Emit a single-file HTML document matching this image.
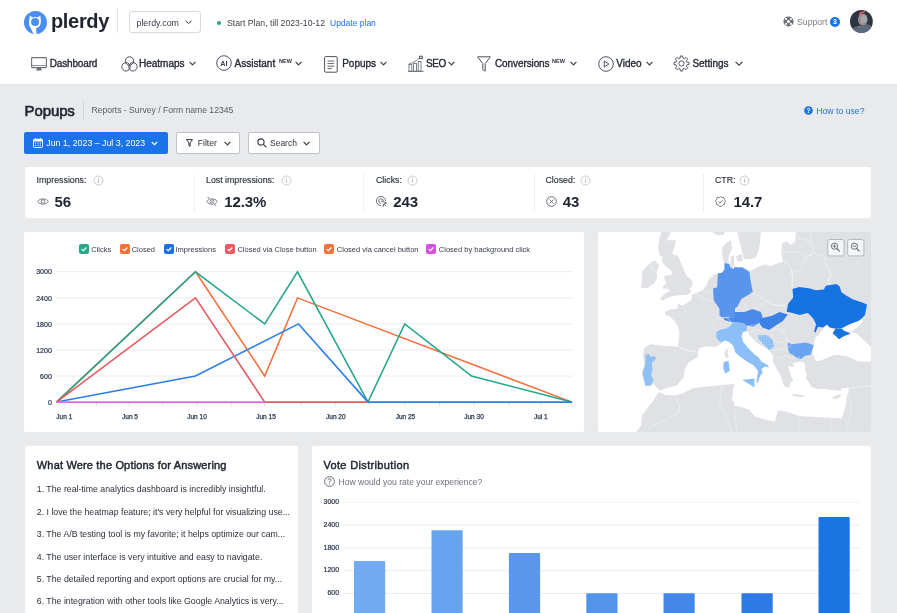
<!DOCTYPE html>
<html><head><meta charset="utf-8">
<style>
*{box-sizing:border-box;margin:0;padding:0}
html,body{will-change:transform;width:897px;height:613px;overflow:hidden;background:#e9eaec;font-family:"Liberation Sans",sans-serif;color:#1f2430}
.a{position:absolute;white-space:nowrap}
#hdr{position:absolute;left:0;top:0;width:897px;height:83.6px;background:#fff;box-shadow:0 0.8px 0 #e2e3e6}
.card{position:absolute;background:#fff;border-radius:2px}
.nav{font-weight:400;font-size:10px;color:#262b35;line-height:10px;-webkit-text-stroke:0.35px #262b35}
.chev{position:absolute}
</style></head><body>
<div id="hdr"></div>

<!-- logo -->
<svg class="a" style="left:24px;top:11px" width="23" height="23" viewBox="0 0 23 23">
<circle cx="11.5" cy="11.5" r="11.5" fill="#4a8ff0"/>
<path d="M5.9 4.6 L8.3 6.5 Q11 5.7 13.8 6.5 L16.3 4.6 L16.9 9.5 Q17.3 15.6 12 17.4 L12.8 23 L9.3 22.8 L6.6 16.8 Q4.6 14.8 5.1 10 Z" fill="#fff"/>
<circle cx="11.1" cy="10.9" r="4" fill="#4a8ff0"/>
</svg>
<div class="a" style="left:50.9px;top:10.8px;font-size:20px;line-height:20px;font-weight:700;letter-spacing:-0.3px;color:#1f2430">plerdy</div>
<div class="a" style="left:117px;top:8px;width:1px;height:25px;background:#e3e5e8"></div>
<div class="a" style="left:128.8px;top:11.3px;width:72.5px;height:22.2px;border:1px solid #d6d9de;border-radius:3px"></div>
<div class="a" style="left:136.5px;top:19px;font-size:8.8px;line-height:9px;color:#353a45">plerdy.com</div>
<svg class="a" style="left:184.5px;top:20.2px" width="7" height="5" viewBox="0 0 7 5"><path d="M0.6 0.8 L3.5 3.6 L6.4 0.8" fill="none" stroke="#2b303b" stroke-width="1"/></svg>
<div class="a" style="left:217.2px;top:20.5px;width:4px;height:4px;border-radius:50%;background:#1fa57f"></div>
<div class="a" style="left:227px;top:19px;font-size:8.7px;line-height:9px;color:#3a3f4a">Start Plan, till 2023-10-12</div>
<div class="a" style="left:330px;top:19px;font-size:8.5px;line-height:9px;color:#1a73e8">Update plan</div>

<svg class="a" style="left:782.5px;top:16.3px" width="11" height="11" viewBox="0 0 11 11"><circle cx="5.5" cy="5.5" r="5.1" fill="#6e7279"/><circle cx="5.5" cy="5.5" r="1.5" fill="#fff"/><g fill="#fff"><circle cx="3.1" cy="3.1" r="1.05"/><circle cx="7.9" cy="3.1" r="1.05"/><circle cx="3.1" cy="7.9" r="1.05"/><circle cx="7.9" cy="7.9" r="1.05"/></g></svg>
<div class="a" style="left:797px;top:18px;font-size:8.7px;line-height:9px;color:#7a7f88">Support</div>
<div class="a" style="left:830px;top:17px;width:10px;height:10px;border-radius:50%;background:#1a73e8;color:#fff;font-size:7px;line-height:10px;text-align:center;font-weight:700">3</div>
<svg class="a" style="left:849.5px;top:10.3px" width="23" height="23" viewBox="0 0 23 23">
<defs><clipPath id="avc"><circle cx="11.4" cy="11.4" r="11.4"/></clipPath></defs>
<g clip-path="url(#avc)">
<rect width="23" height="23" fill="#2f3540"/>
<path d="M13 14 Q17 13 21 16 L23 23 L12 23 Z" fill="#62666e"/>
<path d="M0 19 Q6 16 11 15.5 Q16 15 23 16.5 V23 H0 Z" fill="#5b6a7e"/>
<ellipse cx="12.8" cy="9.6" rx="4.8" ry="6" fill="#8f9399"/>
<ellipse cx="13.8" cy="9" rx="2.8" ry="4" fill="#a4a8ad"/>
<path d="M9 4.5 L10.6 1.4 L12.4 2 L14.6 0.6 L15.2 2.2 L11.5 3.6 L9.8 5.6 Z" fill="#f05a62"/>
<rect x="9.8" y="9.3" width="3.6" height="1.1" fill="#f4866e"/>
<circle cx="11.5" cy="12.8" r="0.8" fill="#f4866e"/>
<circle cx="9.6" cy="16.5" r="0.7" fill="#f4866e"/>
</g></svg>

<!-- nav -->
<svg class="a" style="left:31px;top:57px" width="16" height="14" viewBox="0 0 16 14"><rect x="0.6" y="0.6" width="14.8" height="10" rx="0.8" fill="none" stroke="#6b7079" stroke-width="1.1"/><path d="M0.6 8.6 H15.4" stroke="#6b7079" stroke-width="0.8"/><path d="M5 13.4 L6.3 10.8 H9.7 L11 13.4 Z" fill="#6b7079"/></svg>
<div class="a nav" style="left:49.7px;top:59.2px;letter-spacing:-0.15px">Dashboard</div>

<svg class="a" style="left:120.5px;top:55.5px" width="17" height="16" viewBox="0 0 17 16"><circle cx="8.5" cy="5" r="4.2" fill="none" stroke="#3a3f48" stroke-width="0.9"/><circle cx="5" cy="10.8" r="4.2" fill="none" stroke="#3a3f48" stroke-width="0.9"/><circle cx="12" cy="10.8" r="4.2" fill="none" stroke="#3a3f48" stroke-width="0.9"/></svg>
<div class="a nav" style="left:139px;top:59.2px">Heatmaps</div>
<svg class="a" style="left:188.5px;top:61px" width="7" height="5" viewBox="0 0 7 5"><path d="M0.6 0.9 L3.5 3.9 L6.4 0.9" fill="none" stroke="#3a3f48" stroke-width="1.15"/></svg>

<svg class="a" style="left:216.2px;top:55.2px" width="16" height="16" viewBox="0 0 16 16"><circle cx="8" cy="8" r="7.3" fill="none" stroke="#3a3f48" stroke-width="0.9"/><text x="8" y="10.6" font-family="Liberation Sans" font-size="7.3" font-weight="700" text-anchor="middle" fill="#3a3f48">AI</text></svg>
<div class="a nav" style="left:234.6px;top:59.2px">Assistant</div>
<div class="a" style="left:279px;top:58.6px;font-size:5.5px;line-height:5.5px;font-weight:700;color:#2b303b">NEW</div>
<svg class="a" style="left:294.5px;top:61px" width="7" height="5" viewBox="0 0 7 5"><path d="M0.6 0.9 L3.5 3.9 L6.4 0.9" fill="none" stroke="#3a3f48" stroke-width="1.15"/></svg>

<svg class="a" style="left:323.5px;top:55.5px" width="14" height="17" viewBox="0 0 14 17"><rect x="0.6" y="0.6" width="12.6" height="15.6" rx="1" fill="none" stroke="#3a3f48" stroke-width="0.9"/><path d="M3.5 5 H10.3 M3.5 7.6 H10.3 M3.5 10.2 H10.3 M3.5 12.6 H8" stroke="#3a3f48" stroke-width="0.8"/></svg>
<div class="a nav" style="left:342.2px;top:59.2px">Popups</div>
<svg class="a" style="left:379.5px;top:61px" width="7" height="5" viewBox="0 0 7 5"><path d="M0.6 0.9 L3.5 3.9 L6.4 0.9" fill="none" stroke="#3a3f48" stroke-width="1.15"/></svg>

<svg class="a" style="left:408px;top:55px" width="16" height="17" viewBox="0 0 16 17"><g fill="none" stroke="#5d626b" stroke-width="0.8"><path d="M0.2 16.3 H15.6" stroke-width="0.9"/><rect x="1" y="9.6" width="2.8" height="6.7"/><rect x="5.6" y="8.4" width="2.8" height="7.9"/><rect x="10.2" y="6.4" width="2.8" height="9.9"/><path d="M0.3 9.4 L4.8 7.6 L8.4 5.6 L11.3 3.2"/><rect x="11.6" y="1.2" width="2.6" height="2.4" fill="#fff" stroke="#3a3f48" stroke-width="0.9"/></g></svg>
<div class="a nav" style="left:426px;top:59.2px;letter-spacing:-0.4px">SEO</div>
<svg class="a" style="left:447.5px;top:61px" width="7" height="5" viewBox="0 0 7 5"><path d="M0.6 0.9 L3.5 3.9 L6.4 0.9" fill="none" stroke="#3a3f48" stroke-width="1.15"/></svg>

<svg class="a" style="left:477px;top:55.5px" width="14" height="16" viewBox="0 0 14 16"><path d="M0.6 0.8 H13.4 L8.2 7.6 V15.2 L5.8 13.6 V7.6 Z" fill="none" stroke="#3a3f48" stroke-width="0.9" stroke-linejoin="round"/></svg>
<div class="a nav" style="left:495px;top:59.2px;letter-spacing:-0.1px">Conversions</div>
<div class="a" style="left:552px;top:58.6px;font-size:5.5px;line-height:5.5px;font-weight:700;color:#2b303b">NEW</div>
<svg class="a" style="left:569.5px;top:61px" width="7" height="5" viewBox="0 0 7 5"><path d="M0.6 0.9 L3.5 3.9 L6.4 0.9" fill="none" stroke="#3a3f48" stroke-width="1.15"/></svg>

<svg class="a" style="left:597.5px;top:55.5px" width="16" height="16" viewBox="0 0 16 16"><circle cx="8" cy="8" r="7.3" fill="none" stroke="#3a3f48" stroke-width="0.9"/><path d="M6.3 5 L10.8 8 L6.3 11 Z" fill="none" stroke="#3a3f48" stroke-width="0.9" stroke-linejoin="round"/></svg>
<div class="a nav" style="left:616.2px;top:59.2px">Video</div>
<svg class="a" style="left:645.5px;top:61px" width="7" height="5" viewBox="0 0 7 5"><path d="M0.6 0.9 L3.5 3.9 L6.4 0.9" fill="none" stroke="#3a3f48" stroke-width="1.15"/></svg>

<svg class="a" style="left:673.3px;top:54.9px" width="17" height="17" viewBox="0 0 17 17"><g fill="none" stroke="#3a3f48" stroke-width="0.85" stroke-linejoin="round"><path d="M7.15 3.07 L7.31 0.99 L9.69 0.99 L9.85 3.07 L11.38 3.70 L12.97 2.35 L14.65 4.03 L13.30 5.62 L13.93 7.15 L16.01 7.31 L16.01 9.69 L13.93 9.85 L13.30 11.38 L14.65 12.97 L12.97 14.65 L11.38 13.30 L9.85 13.93 L9.69 16.01 L7.31 16.01 L7.15 13.93 L5.62 13.30 L4.03 14.65 L2.35 12.97 L3.70 11.38 L3.07 9.85 L0.99 9.69 L0.99 7.31 L3.07 7.15 L3.70 5.62 L2.35 4.03 L4.03 2.35 L5.62 3.70 Z"/><circle cx="8.5" cy="8.5" r="2.6"/></g></svg>
<div class="a nav" style="left:692.4px;top:59.2px">Settings</div>
<svg class="a" style="left:735px;top:61px" width="8" height="5" viewBox="0 0 8 5"><path d="M0.6 0.9 L4 4.1 L7.4 0.9" fill="none" stroke="#3a3f48" stroke-width="1.15"/></svg>

<!-- title -->
<div class="a" style="left:24.5px;top:103.3px;font-size:15px;line-height:15px;font-weight:400;-webkit-text-stroke:0.6px #1f2430;color:#1f2430;letter-spacing:-0.1px">Popups</div>
<div class="a" style="left:83px;top:101px;width:1px;height:19px;background:#cfd2d6"></div>
<div class="a" style="left:91.4px;top:106.2px;font-size:8.6px;line-height:9px;color:#555b66">Reports - Survey / Form name 12345</div>
<svg class="a" style="left:803.5px;top:106.3px" width="9" height="9" viewBox="0 0 9 9"><circle cx="4.5" cy="4.5" r="4.3" fill="#1a73e8"/><text x="4.5" y="7.2" font-family="Liberation Sans" font-size="6.5" font-weight="700" text-anchor="middle" fill="#fff">?</text></svg>
<div class="a" style="left:816.2px;top:106.5px;font-size:8.7px;line-height:9px;color:#1a73e8">How to use?</div>

<!-- buttons -->
<div class="a" style="left:24px;top:132px;width:144px;height:22px;background:#1a73e8;border-radius:2px"></div>
<svg class="a" style="left:33px;top:138px" width="10" height="10" viewBox="0 0 10 10"><rect x="0.5" y="1.3" width="9" height="8.2" rx="1" fill="none" stroke="#fff" stroke-width="1"/><rect x="0.5" y="1.3" width="9" height="2.2" fill="#fff"/><path d="M2.5 0 V2 M7.5 0 V2" stroke="#fff" stroke-width="1"/><g fill="#fff"><rect x="2" y="4.6" width="1.2" height="1"/><rect x="4.4" y="4.6" width="1.2" height="1"/><rect x="6.8" y="4.6" width="1.2" height="1"/><rect x="2" y="6.8" width="1.2" height="1"/><rect x="4.4" y="6.8" width="1.2" height="1"/><rect x="6.8" y="6.8" width="1.2" height="1"/></g></svg>
<div class="a" style="left:46.3px;top:138.7px;font-size:8.8px;line-height:9px;color:#fff">Jun 1, 2023 – Jul 3, 2023</div>
<svg class="a" style="left:151px;top:141px" width="7" height="5" viewBox="0 0 7 5"><path d="M0.8 1 L3.5 3.7 L6.2 1" fill="none" stroke="#fff" stroke-width="1.1"/></svg>

<div class="a" style="left:175.5px;top:131.6px;width:64.5px;height:22px;background:#fff;border:1px solid #bfc3c9;border-radius:2px"></div>
<svg class="a" style="left:185.5px;top:138.5px" width="7" height="8" viewBox="0 0 7 8"><path d="M0.5 0.6 H6.5 L4.1 3.8 V7.4 L2.9 6.6 V3.8 Z" fill="none" stroke="#2b303b" stroke-width="1" stroke-linejoin="round"/></svg>
<div class="a" style="left:197.7px;top:138.8px;font-size:8.7px;line-height:9px;color:#2b303b">Filter</div>
<svg class="a" style="left:223.5px;top:141px" width="7" height="5" viewBox="0 0 7 5"><path d="M0.6 0.9 L3.5 3.9 L6.4 0.9" fill="none" stroke="#3a3f48" stroke-width="1.15"/></svg>

<div class="a" style="left:247.7px;top:131.6px;width:72px;height:22px;background:#fff;border:1px solid #bfc3c9;border-radius:2px"></div>
<svg class="a" style="left:257px;top:138px" width="10" height="10" viewBox="0 0 10 10"><circle cx="4" cy="4" r="3.1" fill="none" stroke="#2b303b" stroke-width="1.1"/><path d="M6.3 6.3 L9.2 9.2" stroke="#2b303b" stroke-width="1.2"/></svg>
<div class="a" style="left:270px;top:138.8px;font-size:8.5px;line-height:9px;color:#2b303b">Search</div>
<svg class="a" style="left:302.5px;top:141px" width="7" height="5" viewBox="0 0 7 5"><path d="M0.6 0.9 L3.5 3.9 L6.4 0.9" fill="none" stroke="#3a3f48" stroke-width="1.15"/></svg>

<!-- STATS -->
<div class="card" style="left:24.5px;top:167px;width:846.5px;height:51px;border-radius:2px"></div>
<div class="a" style="left:36.6px;top:176.1px;font-size:8.8px;line-height:8.8px;font-weight:400;-webkit-text-stroke:0.15px #2b303b;color:#2b303b">Impressions:</div>
<svg class="a" style="left:92.5px;top:175px" width="11" height="11" viewBox="0 0 11 11"><circle cx="5.5" cy="5.5" r="4.5" fill="none" stroke="#b9bdc3" stroke-width="0.8"/><path d="M5.5 4.6 V8" stroke="#b4b8be" stroke-width="0.9"/><circle cx="5.5" cy="3.2" r="0.55" fill="#b4b8be"/></svg>
<svg class="a" style="left:36.5px;top:196.5px" width="12" height="9" viewBox="0 0 12 9"><path d="M0.7 4.5 C2.6 1 9.4 1 11.3 4.5 C9.4 8 2.6 8 0.7 4.5 Z" fill="none" stroke="#6b7079" stroke-width="0.9"/><circle cx="6" cy="4.5" r="1.8" fill="none" stroke="#6b7079" stroke-width="0.9"/></svg>
<div class="a" style="left:54.5px;top:193.8px;font-size:15px;line-height:15px;font-weight:700;letter-spacing:-0.1px;color:#1f2430">56</div>
<div class="a" style="left:206.0px;top:176.1px;font-size:8.8px;line-height:8.8px;font-weight:400;-webkit-text-stroke:0.15px #2b303b;color:#2b303b">Lost impressions:</div>
<svg class="a" style="left:281.4px;top:175px" width="11" height="11" viewBox="0 0 11 11"><circle cx="5.5" cy="5.5" r="4.5" fill="none" stroke="#b9bdc3" stroke-width="0.8"/><path d="M5.5 4.6 V8" stroke="#b4b8be" stroke-width="0.9"/><circle cx="5.5" cy="3.2" r="0.55" fill="#b4b8be"/></svg>
<svg class="a" style="left:206.3px;top:195.5px" width="12" height="11" viewBox="0 0 12 11"><path d="M0.7 5.5 C2.6 2 9.4 2 11.3 5.5 C9.4 9 2.6 9 0.7 5.5 Z" fill="none" stroke="#6b7079" stroke-width="0.9"/><circle cx="6" cy="5.5" r="1.8" fill="none" stroke="#6b7079" stroke-width="0.9"/><path d="M1.6 0.9 L10.2 10.1" stroke="#fff" stroke-width="1.8"/><path d="M1.6 0.9 L10.2 10.1" stroke="#6b7079" stroke-width="1"/></svg>
<div class="a" style="left:224.2px;top:193.8px;font-size:15px;line-height:15px;font-weight:700;letter-spacing:-0.1px;color:#1f2430">12.3%</div>
<div class="a" style="left:376.0px;top:176.1px;font-size:8.8px;line-height:8.8px;font-weight:400;-webkit-text-stroke:0.15px #2b303b;color:#2b303b">Clicks:</div>
<svg class="a" style="left:407.1px;top:175px" width="11" height="11" viewBox="0 0 11 11"><circle cx="5.5" cy="5.5" r="4.5" fill="none" stroke="#b9bdc3" stroke-width="0.8"/><path d="M5.5 4.6 V8" stroke="#b4b8be" stroke-width="0.9"/><circle cx="5.5" cy="3.2" r="0.55" fill="#b4b8be"/></svg>
<svg class="a" style="left:376px;top:195.5px" width="11" height="11" viewBox="0 0 11 11"><path d="M5 9.6 A4.6 4.6 0 1 1 9.6 5" fill="none" stroke="#6b7079" stroke-width="1"/><path d="M5.2 7.3 A2.3 2.3 0 1 1 7.3 5.2" fill="none" stroke="#6b7079" stroke-width="1"/><path d="M5 5 L10.5 7 L8 8 L10.3 10.3 M8 8 L7 10.5 Z" fill="none" stroke="#6b7079" stroke-width="1" stroke-linejoin="round"/></svg>
<div class="a" style="left:393.3px;top:193.8px;font-size:15px;line-height:15px;font-weight:700;letter-spacing:-0.1px;color:#1f2430">243</div>
<div class="a" style="left:545.5px;top:176.1px;font-size:8.8px;line-height:8.8px;font-weight:400;-webkit-text-stroke:0.15px #2b303b;color:#2b303b">Closed:</div>
<svg class="a" style="left:579.7px;top:175px" width="11" height="11" viewBox="0 0 11 11"><circle cx="5.5" cy="5.5" r="4.5" fill="none" stroke="#b9bdc3" stroke-width="0.8"/><path d="M5.5 4.6 V8" stroke="#b4b8be" stroke-width="0.9"/><circle cx="5.5" cy="3.2" r="0.55" fill="#b4b8be"/></svg>
<svg class="a" style="left:546px;top:195.6px" width="11" height="11" viewBox="0 0 11 11"><circle cx="5.5" cy="5.5" r="4.8" fill="none" stroke="#6b7079" stroke-width="1"/><path d="M3.5 3.5 L7.5 7.5 M7.5 3.5 L3.5 7.5" stroke="#6b7079" stroke-width="1"/></svg>
<div class="a" style="left:562.7px;top:193.8px;font-size:15px;line-height:15px;font-weight:700;letter-spacing:-0.1px;color:#1f2430">43</div>
<div class="a" style="left:715.0px;top:176.1px;font-size:8.8px;line-height:8.8px;font-weight:400;-webkit-text-stroke:0.15px #2b303b;color:#2b303b">CTR:</div>
<svg class="a" style="left:739.3px;top:175px" width="11" height="11" viewBox="0 0 11 11"><circle cx="5.5" cy="5.5" r="4.5" fill="none" stroke="#b9bdc3" stroke-width="0.8"/><path d="M5.5 4.6 V8" stroke="#b4b8be" stroke-width="0.9"/><circle cx="5.5" cy="3.2" r="0.55" fill="#b4b8be"/></svg>
<svg class="a" style="left:715.3px;top:195.6px" width="11" height="11" viewBox="0 0 11 11"><path d="M5.5 0.6 L7 1.6 L8.9 1.6 L9.4 3.4 L10.5 4.9 L9.6 6.5 L9.5 8.4 L7.8 9 L6.4 10.4 L4.6 10.4 L3.2 9 L1.5 8.4 L1.4 6.5 L0.5 4.9 L1.6 3.4 L2.1 1.6 L4 1.6 Z" fill="none" stroke="#6b7079" stroke-width="0.9" stroke-linejoin="round"/><path d="M3.4 5.6 L4.9 7 L7.6 4.2" fill="none" stroke="#6b7079" stroke-width="1"/></svg>
<div class="a" style="left:733.4px;top:193.8px;font-size:15px;line-height:15px;font-weight:700;letter-spacing:-0.1px;color:#1f2430">14.7</div>
<div class="a" style="left:193.5px;top:174.5px;width:0;height:36.5px;border-left:1px dotted #e0e2e6"></div>
<div class="a" style="left:363.4px;top:174.5px;width:0;height:36.5px;border-left:1px dotted #e0e2e6"></div>
<div class="a" style="left:534.0px;top:174.5px;width:0;height:36.5px;border-left:1px dotted #e0e2e6"></div>
<div class="a" style="left:702.7px;top:174.5px;width:0;height:36.5px;border-left:1px dotted #e0e2e6"></div>

<!-- chart card -->
<div class="card" style="left:24px;top:232px;width:560px;height:200px"></div>
<svg class="a" style="left:24px;top:232px" width="560" height="200" viewBox="24 232 560 200">
<path d="M56 271.7 H572.5" stroke="#ebecef" stroke-width="1"/>
<path d="M56 297.8 H572.5" stroke="#ebecef" stroke-width="1"/>
<path d="M56 323.9 H572.5" stroke="#ebecef" stroke-width="1"/>
<path d="M56 350.0 H572.5" stroke="#ebecef" stroke-width="1"/>
<path d="M56 376.1 H572.5" stroke="#ebecef" stroke-width="1"/>
<text x="51.8" y="274.4" text-anchor="end" font-family="Liberation Sans" font-size="7" fill="#2a3850" stroke="#2a3850" stroke-width="0.22">3000</text>
<text x="51.8" y="300.5" text-anchor="end" font-family="Liberation Sans" font-size="7" fill="#2a3850" stroke="#2a3850" stroke-width="0.22">2400</text>
<text x="51.8" y="326.59999999999997" text-anchor="end" font-family="Liberation Sans" font-size="7" fill="#2a3850" stroke="#2a3850" stroke-width="0.22">1800</text>
<text x="51.8" y="352.7" text-anchor="end" font-family="Liberation Sans" font-size="7" fill="#2a3850" stroke="#2a3850" stroke-width="0.22">1200</text>
<text x="51.8" y="378.79999999999995" text-anchor="end" font-family="Liberation Sans" font-size="7" fill="#2a3850" stroke="#2a3850" stroke-width="0.22">600</text>
<text x="51.8" y="404.9" text-anchor="end" font-family="Liberation Sans" font-size="7" fill="#2a3850" stroke="#2a3850" stroke-width="0.22">0</text>
<path d="M64.3 402.5 V406.5" stroke="#dadce0" stroke-width="0.8"/>
<path d="M96.5 402.5 V406.5" stroke="#dadce0" stroke-width="0.8"/>
<path d="M129.3 402.5 V406.5" stroke="#dadce0" stroke-width="0.8"/>
<path d="M162.7 402.5 V406.5" stroke="#dadce0" stroke-width="0.8"/>
<path d="M197 402.5 V406.5" stroke="#dadce0" stroke-width="0.8"/>
<path d="M231.3 402.5 V406.5" stroke="#dadce0" stroke-width="0.8"/>
<path d="M264.7 402.5 V406.5" stroke="#dadce0" stroke-width="0.8"/>
<path d="M301 402.5 V406.5" stroke="#dadce0" stroke-width="0.8"/>
<path d="M335.2 402.5 V406.5" stroke="#dadce0" stroke-width="0.8"/>
<path d="M369.6 402.5 V406.5" stroke="#dadce0" stroke-width="0.8"/>
<path d="M404.7 402.5 V406.5" stroke="#dadce0" stroke-width="0.8"/>
<path d="M439.5 402.5 V406.5" stroke="#dadce0" stroke-width="0.8"/>
<path d="M474 402.5 V406.5" stroke="#dadce0" stroke-width="0.8"/>
<path d="M509 402.5 V406.5" stroke="#dadce0" stroke-width="0.8"/>
<path d="M540.8 402.5 V406.5" stroke="#dadce0" stroke-width="0.8"/>
<path d="M572 402.5 V406.5" stroke="#dadce0" stroke-width="0.8"/>
<text x="64.3" y="418.7" text-anchor="middle" font-family="Liberation Sans" font-size="6.5" fill="#2a3850" stroke="#2a3850" stroke-width="0.25">Jun 1</text>
<text x="130" y="418.7" text-anchor="middle" font-family="Liberation Sans" font-size="6.5" fill="#2a3850" stroke="#2a3850" stroke-width="0.25">Jun 5</text>
<text x="197" y="418.7" text-anchor="middle" font-family="Liberation Sans" font-size="6.5" fill="#2a3850" stroke="#2a3850" stroke-width="0.25">Jun 10</text>
<text x="266" y="418.7" text-anchor="middle" font-family="Liberation Sans" font-size="6.5" fill="#2a3850" stroke="#2a3850" stroke-width="0.25">Jun 15</text>
<text x="335.8" y="418.7" text-anchor="middle" font-family="Liberation Sans" font-size="6.5" fill="#2a3850" stroke="#2a3850" stroke-width="0.25">Jun 20</text>
<text x="405.4" y="418.7" text-anchor="middle" font-family="Liberation Sans" font-size="6.5" fill="#2a3850" stroke="#2a3850" stroke-width="0.25">Jun 25</text>
<text x="474" y="418.7" text-anchor="middle" font-family="Liberation Sans" font-size="6.5" fill="#2a3850" stroke="#2a3850" stroke-width="0.25">Jun 30</text>
<text x="540.8" y="418.7" text-anchor="middle" font-family="Liberation Sans" font-size="6.5" fill="#2a3850" stroke="#2a3850" stroke-width="0.25">Jul 1</text>
<polyline points="56.5,402.1 195.5,271.8 264.7,376.0 297.5,297.9 572,402.1" fill="none" stroke="#f5713a" stroke-width="1.55" stroke-linejoin="miter"/>
<polyline points="56.5,402.1 195.5,271.8 264.7,323.9 297.5,271.8 368,402.1 404.7,323.9 471.6,376.0 572,402.1" fill="none" stroke="#22a68a" stroke-width="1.55" stroke-linejoin="miter"/>
<polyline points="56.5,402.1 195.5,376.0 298.5,323.9 368,402.1 572,402.1" fill="none" stroke="#2b7de9" stroke-width="1.55" stroke-linejoin="miter"/>
<polyline points="56.5,402.1 195.5,297.9 264.7,402.1 368,402.1" fill="none" stroke="#e85a5f" stroke-width="1.55" stroke-linejoin="miter"/>
<polyline points="56.5,402.1 264.7,402.1" fill="none" stroke="#df6ae6" stroke-width="1.8" stroke-linejoin="miter"/>
</svg>
<svg class="a" style="left:79.2px;top:243.9px" width="10" height="10" viewBox="0 0 10 10"><rect width="10" height="10" rx="2" fill="#27a88a"/><path d="M2.6 5.1 L4.3 6.7 L7.4 3.5" fill="none" stroke="#fff" stroke-width="1.2"/></svg>
<div class="a" style="left:91.2px;top:245.6px;font-size:7.5px;line-height:8px;color:#353b48">Clicks</div>
<svg class="a" style="left:119.7px;top:243.9px" width="10" height="10" viewBox="0 0 10 10"><rect width="10" height="10" rx="2" fill="#f5713a"/><path d="M2.6 5.1 L4.3 6.7 L7.4 3.5" fill="none" stroke="#fff" stroke-width="1.2"/></svg>
<div class="a" style="left:131.7px;top:245.6px;font-size:7.5px;line-height:8px;color:#353b48">Closed</div>
<svg class="a" style="left:163.8px;top:243.9px" width="10" height="10" viewBox="0 0 10 10"><rect width="10" height="10" rx="2" fill="#1c6fe6"/><path d="M2.6 5.1 L4.3 6.7 L7.4 3.5" fill="none" stroke="#fff" stroke-width="1.2"/></svg>
<div class="a" style="left:175.5px;top:245.6px;font-size:7.5px;line-height:8px;color:#353b48">Impressions</div>
<svg class="a" style="left:224.7px;top:243.9px" width="10" height="10" viewBox="0 0 10 10"><rect width="10" height="10" rx="2" fill="#ea5b63"/><path d="M2.6 5.1 L4.3 6.7 L7.4 3.5" fill="none" stroke="#fff" stroke-width="1.2"/></svg>
<div class="a" style="left:237.4px;top:245.6px;font-size:7.5px;line-height:8px;color:#353b48">Closed via Close button</div>
<svg class="a" style="left:324px;top:243.9px" width="10" height="10" viewBox="0 0 10 10"><rect width="10" height="10" rx="2" fill="#f5713a"/><path d="M2.6 5.1 L4.3 6.7 L7.4 3.5" fill="none" stroke="#fff" stroke-width="1.2"/></svg>
<div class="a" style="left:336.8px;top:245.6px;font-size:7.5px;line-height:8px;color:#353b48">Closed via cancel button</div>
<svg class="a" style="left:426.4px;top:243.9px" width="10" height="10" viewBox="0 0 10 10"><rect width="10" height="10" rx="2" fill="#d54fe0"/><path d="M2.6 5.1 L4.3 6.7 L7.4 3.5" fill="none" stroke="#fff" stroke-width="1.2"/></svg>
<div class="a" style="left:438.8px;top:245.6px;font-size:7.5px;line-height:8px;color:#353b48">Closed by background click</div>

<!-- map card -->
<div class="card" style="left:598px;top:232px;width:273px;height:200px;overflow:hidden"></div>
<!--MAPSTART-->
<svg class="a" style="left:598px;top:232px" width="273" height="200" viewBox="0 0 273 200">
<defs><pattern id="dt" width="2.6" height="2.6" patternUnits="userSpaceOnUse"><circle cx="1.3" cy="1.3" r="0.35" fill="#000" fill-opacity="0.12"/></pattern><pattern id="dt2" width="1.6" height="1.6" patternUnits="userSpaceOnUse"><rect width="0.8" height="0.8" fill="#fff" fill-opacity="0.35"/></pattern><clipPath id="cA"><rect x="0" y="0" width="137" height="100.5"/></clipPath><clipPath id="cB"><rect x="136" y="0" width="137" height="100.5"/></clipPath><clipPath id="cC"><rect x="0" y="99.5" width="137" height="100.5"/></clipPath><clipPath id="cD"><rect x="136" y="99.5" width="137" height="100.5"/></clipPath><clipPath id="call"><rect x="0" y="0" width="273" height="200" rx="2"/></clipPath></defs>
<g clip-path="url(#call)">
<g clip-path="url(#cA)">
<polygon points="63.6,0.0 72.6,0.0 71.0,4.1 68.5,8.2 78.0,8.2 76.7,14.7 74.2,21.2 75.8,22.8 79.9,23.7 84.8,35.1 88.1,43.2 94.6,48.9 93.8,54.6 91.3,56.3 93.3,60.3 89.7,62.8 78.3,63.6 71.0,65.2 64.4,68.5 62.0,66.9 66.1,62.0 71.8,59.5 70.1,57.1 64.4,56.3 66.1,53.0 68.5,51.4 66.9,48.1 66.1,44.0 71.0,43.2 74.2,42.4 73.4,39.1 70.1,35.9 65.2,31.8 63.6,27.7 65.2,24.5 62.0,24.5 60.0,16.3 61.2,6.5" fill="#dfe1e5"/>
<polygon points="53.8,29.4 57.9,29.0 61.2,33.4 58.7,39.1 59.0,45.7 56.3,51.4 48.9,56.3 42.7,55.5 44.4,46.5 43.7,40.0 48.9,34.3" fill="#dfe1e5"/>
<polygon points="124.3,15.5 127.2,11.7 132.9,7.8 134.1,15.5 132.1,21.2 130.5,26.1 130.5,31.0 126.4,31.0 124.3,26.1" fill="#dfe1e5"/>
<polygon points="132.9,24.5 137.0,22.8 137.0,35.9 132.1,35.1" fill="#dfe1e5"/>
<polygon points="114.2,0.0 127.2,0.0 125.6,2.4 120.7,3.6 116.6,2.0" fill="#dfe1e5"/>
<polygon points="66.9,79.9 71.8,77.5 79.1,76.7 79.9,71.8 84.8,73.4 93.0,68.5 94.3,62.0 97.9,61.2 104.4,57.9 108.5,53.8 110.1,48.1 114.2,43.7 120.7,40.8 124.0,40.8 137.8,39.1 137.8,101.1 81.6,101.1 79.9,94.6 76.7,88.9 71.8,84.8 67.2,82.4" fill="#dfe1e5"/>
</g>
<g clip-path="url(#cB)">
<polygon points="135.2,-0.8 273.8,-0.8 273.8,101.1 135.2,101.1" fill="#dfe1e5"/>
<polygon points="135.2,-0.8 198.0,-0.8 197.2,9.8 192.3,13.0 189.0,9.0 184.1,11.4 183.3,21.2 184.9,29.4 178.4,31.8 172.7,34.3 167.8,32.6 161.3,34.3 152.3,39.1 145.8,35.1 135.2,35.1" fill="#fff"/>
<polygon points="139.3,-0.8 162.9,-0.8 162.1,9.8 160.5,19.6 157.2,26.1 151.5,26.9 145.8,26.9 143.3,16.3 140.9,6.5" fill="#dfe1e5"/>
<polygon points="137.6,24.5 143.3,22.0 145.0,28.5 140.1,30.2" fill="#dfe1e5"/>
</g>
<g clip-path="url(#cC)">
<polygon points="81.6,99.2 118.3,99.2 120.7,106.5 124.0,111.4 117.4,114.7 107.6,114.4 101.1,116.3 100.3,120.4 91.3,119.6 84.8,117.1 79.9,114.4" fill="#dfe1e5"/>
<polygon points="45.7,116.3 52.2,112.2 68.5,113.9 79.9,114.4 84.8,117.1 91.3,119.6 100.3,120.4 99.5,125.3 93.8,128.5 89.7,131.8 86.4,139.1 85.6,145.7 78.3,153.8 70.1,155.5 62.0,158.7 55.5,152.2 47.3,153.8 44.0,142.4 46.5,132.6 44.9,124.5 45.7,119.6" fill="#dfe1e5"/>
<polygon points="61.2,160.3 66.9,162.8 76.7,163.6 84.8,161.2 94.6,156.3 107.6,154.6 124.0,153.0 133.7,152.2 137.8,151.4 137.8,201.1 37.5,201.1 43.2,193.0 44.0,183.2 48.9,176.7 55.5,168.5 58.7,162.8" fill="#dfe1e5"/>
<polygon points="137.8,154.6 135.1,156.3 134.1,168.5 137.8,171.8" fill="#fff"/>
<polygon points="127.2,117.9 129.7,117.1 130.5,126.1 128.0,126.1 126.4,122.0" fill="#dfe1e5"/>
</g>
<g clip-path="url(#cD)">
<polygon points="135.2,99.2 273.8,99.2 273.8,201.1 135.2,201.1" fill="#dfe1e5"/>
<polygon points="135.2,99.2 149.7,99.2 151.7,103.6 159.3,111.1 171.2,118.3 175.1,124.1 177.1,129.4 180.0,135.9 184.9,144.0 184.1,148.1 188.2,154.6 193.1,153.8 191.5,147.3 193.9,144.0 191.5,137.5 193.9,134.3 192.3,131.0 196.3,130.2 198.8,131.8 206.1,131.0 208.6,133.4 212.7,130.2 217.6,129.4 207.8,138.3 207.8,142.4 210.2,148.9 212.7,153.8 220.8,156.3 233.9,156.3 242.0,157.1 251.0,155.5 248.5,166.9 246.9,176.7 243.6,186.4 212.7,184.8 201.2,184.0 189.8,179.9 180.0,178.3 176.8,189.7 168.6,188.1 157.2,184.8 150.7,177.5 142.5,175.0 135.2,173.4" fill="#fff"/>
<polygon points="214.3,117.9 215.9,109.8 222.4,102.4 227.3,99.2 235.5,99.2 240.4,107.3 250.2,103.3 254.3,99.2 261.6,109.8 273.8,116.3 273.8,129.4 260.0,129.4 248.5,123.7 237.1,124.5 227.3,128.5 219.2,127.7" fill="#fff"/>
<polygon points="194.7,162.0 206.1,163.3 204.5,164.9 195.5,163.9" fill="#dfe1e5"/>
<polygon points="233.9,165.6 242.0,162.8 240.4,166.1 235.5,166.9" fill="#dfe1e5"/>
</g>
<polygon points="216.1,121.6 217.4,105.9 221.3,102.0 227.8,92.8 231.7,96.1 236.3,97.8 234.4,101.3 238.9,104.6 240.9,107.2 246.1,103.9 252.6,101.7 257.9,100.7 273.0,115.0 273.0,121.6" fill="#fff"/>
<polygon points="244.1,96.5 253.9,91.5 263.1,87.6 265.0,89.6 259.2,95.4 252.6,99.4 246.1,98.7" fill="#fff"/>
<polygon points="171.8,116.9 175.2,120.8 175.2,130.6 179.1,137.5 183.1,144.3 184.0,148.3 186.0,154.1 188.4,155.1 191.4,156.1 192.4,151.2 195.8,147.8 194.3,146.3 192.4,142.4 191.4,138.5 190.4,133.6 193.3,135.3 196.8,134.1 194.3,131.4 201.2,129.5 206.1,130.4 207.2,133.8 210.0,130.8 216.8,128.9 213.9,122.8 214.9,118.9 212.9,112.5 171.8,112.5" fill="#dfe1e5"/>
<polygon points="207.2,133.8 210.0,130.8 217.8,128.7 220.8,129.2 228.6,125.7 236.4,122.8 243.3,122.8 243.3,159.0 232.5,158.1 226.6,157.1 220.8,157.6 212.9,155.1 212.0,152.2 207.5,146.3 209.0,142.4 207.1,138.5" fill="#dfe1e5"/>
<polygon points="191.4,156.1 192.4,151.2 195.8,147.8 194.3,146.3 192.4,142.4 191.4,138.5 190.4,133.6 193.3,135.3 196.8,134.1 194.3,131.4 201.2,129.5 206.1,130.4 207.2,133.8 207.1,138.5 209.0,142.4 207.5,146.3 212.0,152.2 212.9,155.1 220.8,157.6 226.6,157.1 232.5,158.1 243.3,159.0 243.3,162.0 190.4,162.0 187.5,157.1" fill="#fff"/>
<polygon points="213.4,112.5 243.3,112.5 243.3,122.8 236.4,122.8 228.6,125.7 220.8,129.2 217.8,128.7 215.4,123.8 213.9,118.9" fill="#fff"/>
<polygon points="194.3,162.0 198.2,162.5 206.1,163.7 205.1,164.9 200.2,164.4 194.8,163.4" fill="#dfe1e5"/>
<polygon points="234.5,164.9 239.4,163.0 243.3,162.3 241.8,165.4 236.4,166.9" fill="#dfe1e5"/>
<g clip-path="url(#cA)">
<polygon points="126.4,31.0 131.3,31.8 132.1,35.1 137.8,38.3 137.8,88.9 133.7,87.3 130.5,84.8 124.0,85.6 121.5,83.2 121.5,76.7 115.8,68.5 115.0,56.3 119.1,55.5 119.9,41.6 124.0,40.8 126.4,37.5" fill="#5a96ee"/>
<polygon points="126.4,31.0 131.3,31.8 132.1,35.1 137.8,38.3 137.8,88.9 133.7,87.3 130.5,84.8 124.0,85.6 121.5,83.2 121.5,76.7 115.8,68.5 115.0,56.3 119.1,55.5 119.9,41.6 124.0,40.8 126.4,37.5" fill="url(#dt)"/>
<polygon points="125.6,85.6 137.8,86.4 137.8,90.5 132.1,89.7 126.4,88.1" fill="#4b8aea"/>
</g>
<g clip-path="url(#cB)">
<polygon points="135.2,35.1 144.2,35.6 151.5,40.0 152.3,47.3 154.8,60.3 143.3,66.9 139.3,75.0 135.2,76.7" fill="#5a96ee"/>
<polygon points="135.2,35.1 144.2,35.6 151.5,40.0 152.3,47.3 154.8,60.3 143.3,66.9 139.3,75.0 135.2,76.7" fill="url(#dt)"/>
<polygon points="135.2,79.9 146.6,79.9 153.9,76.7 162.9,79.9 164.5,84.8 161.3,91.3 155.6,94.6 147.4,93.8 141.7,91.3 135.2,89.7" fill="#4b8aea"/>
<polygon points="162.1,86.4 173.5,84.0 181.7,79.9 189.8,82.4 184.9,88.9 178.4,93.0 171.1,97.9 164.5,95.4 161.3,91.3" fill="#3d82e7"/>
<polygon points="162.1,86.4 173.5,84.0 181.7,79.9 189.8,82.4 184.9,88.9 178.4,93.0 171.1,97.9 164.5,95.4 161.3,91.3" fill="url(#dt)"/>
</g>
<g clip-path="url(#cC)">
<polygon points="125.6,130.2 130.5,128.5 131.8,139.1 127.2,141.6 125.3,136.7" fill="#8cbff8"/>
<polygon points="47.3,122.8 50.6,122.0 52.2,124.5 57.1,124.5 57.9,126.9 53.8,131.0 54.6,137.5 53.0,143.2 55.5,147.3 53.0,153.8 47.3,153.8 45.7,145.7 44.4,140.8 46.5,135.1 47.6,128.5" fill="#8fc1f7"/>
<polygon points="47.3,122.8 50.6,122.0 52.2,124.5 57.1,124.5 57.9,126.9 53.8,131.0 54.6,137.5 53.0,143.2 55.5,147.3 53.0,153.8 47.3,153.8 45.7,145.7 44.4,140.8 46.5,135.1 47.6,128.5" fill="url(#dt)"/>
</g>
<g clip-path="url(#cD)">
<polygon points="144.2,148.1 156.4,146.5 156.4,155.5 151.5,152.2" fill="#8cbff8"/>
<polygon points="159.7,103.3 168.6,103.3 174.3,107.3 176.0,114.7 171.1,117.9 165.4,112.2 160.5,106.5" fill="#86bbf6"/>
<polygon points="159.7,103.3 168.6,103.3 174.3,107.3 176.0,114.7 171.1,117.9 165.4,112.2 160.5,106.5" fill="url(#dt2)"/>
<polygon points="189.8,110.6 193.9,112.2 199.6,111.4 207.8,110.6 215.9,113.0 214.3,117.9 212.7,122.8 207.0,123.7 202.9,126.9 198.0,126.1 196.3,123.7 191.5,121.2 189.8,116.3" fill="#6aa4f1"/>
</g>
<polygon points="118.3,100.0 121.6,97.4 128.1,96.1 132.0,94.1 134.6,90.8 141.2,90.2 147.0,91.5 149.0,94.1 148.7,98.7 145.1,100.0 143.5,103.9 145.1,109.8 150.3,116.3 156.8,122.8 160.1,124.8 163.4,129.4 169.9,133.3 170.9,135.6 167.3,134.6 163.4,137.2 164.7,141.1 162.1,143.7 160.7,148.0 159.4,151.6 158.4,149.6 159.4,143.7 160.1,139.1 155.5,133.3 149.0,129.4 141.2,124.1 137.2,120.2 135.3,113.7 130.7,109.8 126.8,108.5 123.5,110.4 120.3,108.5 118.3,105.2" fill="#8cbff8"/>
<polygon points="194.5,56.9 201.1,55.0 210.9,56.3 218.0,58.2 225.9,57.6 227.8,53.7 238.3,52.1 241.5,54.3 243.5,60.2 248.1,63.5 255.2,67.4 264.4,70.6 269.0,72.6 267.0,83.0 263.1,87.0 260.5,88.9 251.3,92.2 244.1,96.1 238.3,96.7 231.7,95.4 229.1,92.6 225.2,95.4 220.0,94.8 217.4,100.7 216.1,99.4 218.0,92.8 214.8,86.3 209.6,81.1 201.7,83.0 194.5,81.1 188.7,79.8 190.0,71.9 195.2,65.4" fill="#1673e2"/>
<polygon points="234.6,101.3 237.6,96.7 243.5,96.5 246.1,98.7 252.6,101.7 246.1,103.9 240.9,107.2 238.3,104.6" fill="#1673e2"/>
<g fill="none" stroke="#fff" stroke-width="0.45" stroke-opacity="0.9" stroke-linejoin="round">
<polyline points="184.0,20.2 191.2,19.6 200.3,19.6 206.8,25.5"/>
<polyline points="177.5,31.3 185.9,29.4 191.2,33.3 193.8,38.5 200.3,39.2 202.9,35.2 208.1,27.4 215.3,20.9"/>
<polyline points="206.8,25.5 215.3,20.9 213.4,10.4 212.1,0.0"/>
<polyline points="199.0,5.2 210.7,9.1 213.4,10.4"/>
<polyline points="193.8,38.5 195.1,45.7 193.8,52.2 195.1,56.1"/>
<polyline points="215.3,20.9 226.4,24.8 227.7,32.6 234.2,43.1 230.3,45.7 231.0,52.2"/>
<polyline points="152.0,60.1 159.8,64.0 167.7,67.9 172.9,71.8 179.4,73.8 187.2,73.1"/>
<polyline points="193.2,38.0 194.5,45.8 193.9,56.3"/>
<polyline points="230.4,38.0 232.4,44.5 230.4,51.7"/>
<polyline points="173.0,73.2 180.8,72.6 188.7,75.2"/>
<polyline points="209.6,81.1 214.8,86.3 218.0,92.8"/>
<polyline points="180.8,96.7 187.4,103.3 190.6,109.8"/>
<polyline points="115.1,90.8 120.3,86.3 128.1,85.6 132.0,88.2 133.3,91.5 129.4,96.1 124.2,96.7 119.0,98.7 115.1,94.8 115.1,90.8"/>
<polyline points="145.1,68.0 149.0,78.4 159.4,75.8 169.9,68.0"/>
<polyline points="149.0,94.1 156.8,92.8 162.1,90.8"/>
<polyline points="150.3,100.6 156.8,98.0 164.7,99.3 175.1,98.0 180.3,96.7 186.9,99.3"/>
<polyline points="175.1,120.2 180.3,116.3 186.9,117.6 193.4,113.7"/>
<polyline points="180.3,126.7 186.9,124.1 193.4,126.7 202.0,125.4"/>
<polyline points="172.5,99.3 175.1,107.2 180.3,111.1 185.6,109.8 190.8,107.2"/>
<polyline points="97.9,61.2 106.0,66.9 115.0,70.1"/>
<polyline points="104.4,57.9 112.5,60.7 115.0,56.3"/>
<polyline points="53.0,30.2 53.5,38.3 58.7,39.1"/>
<polyline points="79.9,114.4 88.1,117.9 100.3,120.4"/>
<polyline points="78.3,163.6 82.4,179.1 68.5,188.1 52.2,194.6"/>
<polyline points="124.0,153.8 121.5,171.8 130.5,191.3 133.7,200.0"/>
<polyline points="201.2,184.0 200.4,200.0"/>
<polyline points="233.9,187.3 232.2,200.0"/>
<polyline points="250.2,157.1 253.4,178.3 248.5,200.0"/>
<polyline points="251.0,156.3 273.0,153.8"/>
<polyline points="136.0,176.7 139.3,200.0"/>
</g></g>
<rect x="229.8" y="7.5" width="16.2" height="16.4" rx="2" fill="#f5f6f7" stroke="#a3a7ad" stroke-width="0.75"/>
<circle cx="236.5" cy="14.2" r="3.1" fill="none" stroke="#555a62" stroke-width="0.85"/><path d="M238.7 16.4 L241.6 19.299999999999997" stroke="#555a62" stroke-width="1.05"/>
<path d="M234.9 14.2 H238.1" stroke="#555a62" stroke-width="0.8"/>
<path d="M236.5 12.6 V15.799999999999999" stroke="#555a62" stroke-width="0.8"/>
<rect x="249.7" y="7.5" width="16.2" height="16.4" rx="2" fill="#f5f6f7" stroke="#a3a7ad" stroke-width="0.75"/>
<circle cx="256.4" cy="14.2" r="3.1" fill="none" stroke="#555a62" stroke-width="0.85"/><path d="M258.6 16.4 L261.5 19.299999999999997" stroke="#555a62" stroke-width="1.05"/>
<path d="M254.8 14.2 H258.0" stroke="#555a62" stroke-width="0.8"/>
</svg>
<!--MAPEND-->

<!-- bottom cards -->
<div class="card" style="left:24.5px;top:446px;width:273px;height:200px"></div>
<div class="a" style="left:36.8px;top:459.9px;font-size:11px;line-height:11px;font-weight:400;-webkit-text-stroke:0.45px #1f2430;letter-spacing:0.17px;color:#1f2430">What Were the Options for Answering</div>
<div class="a" style="left:36.8px;top:485.09px;font-size:8.75px;line-height:8.75px;color:#2b303b">1. The real-time analytics dashboard is incredibly insightful.</div>
<div class="a" style="left:36.8px;top:507.79px;font-size:8.75px;line-height:8.75px;color:#2b303b">2. I love the heatmap feature; it's very helpful for visualizing use...</div>
<div class="a" style="left:36.8px;top:530.19px;font-size:8.75px;line-height:8.75px;color:#2b303b">3. The A/B testing tool is my favorite; it helps optimize our cam...</div>
<div class="a" style="left:36.8px;top:552.59px;font-size:8.75px;line-height:8.75px;color:#2b303b">4. The user interface is very intuitive and easy to navigate.</div>
<div class="a" style="left:36.8px;top:574.99px;font-size:8.75px;line-height:8.75px;color:#2b303b">5. The detailed reporting and export options are crucial for my...</div>
<div class="a" style="left:36.8px;top:597.49px;font-size:8.75px;line-height:8.75px;color:#2b303b">6. The integration with other tools like Google Analytics is very...</div>
<div class="card" style="left:311.5px;top:446px;width:559.5px;height:200px"></div>
<div class="a" style="left:323.4px;top:459.9px;font-size:11px;line-height:11px;font-weight:400;-webkit-text-stroke:0.45px #1f2430;letter-spacing:0.35px;color:#1f2430">Vote Distribution</div>
<svg class="a" style="left:323.7px;top:476.3px" width="11" height="11" viewBox="0 0 11 11"><circle cx="5.5" cy="5.5" r="4.9" fill="none" stroke="#5d626b" stroke-width="0.9"/><path d="M3.9 4.3 Q3.9 2.7 5.5 2.7 Q7.1 2.7 7.1 4.2 Q7.1 5.2 5.5 5.8 V6.7" fill="none" stroke="#5d626b" stroke-width="0.9"/><circle cx="5.5" cy="8.1" r="0.55" fill="#5d626b"/></svg>
<div class="a" style="left:338.5px;top:477.62px;font-size:8.6px;line-height:8.6px;color:#6b7079">How would you rate your experience?</div>
<svg class="a" style="left:311.5px;top:446px" width="559.5" height="167" viewBox="311.5 446 559.5 167">
<path d="M342.8 502.3 H859.5" stroke="#e6e7ea" stroke-width="0.8" stroke-dasharray="1.5 1"/>
<text x="338.6" y="504.05" text-anchor="end" font-family="Liberation Sans" font-size="7" fill="#2a3850" stroke="#2a3850" stroke-width="0.22">3000</text>
<path d="M342.8 525.1 H859.5" stroke="#ebecef" stroke-width="1"/>
<text x="338.6" y="526.85" text-anchor="end" font-family="Liberation Sans" font-size="7" fill="#2a3850" stroke="#2a3850" stroke-width="0.22">2400</text>
<path d="M342.8 547.9 H859.5" stroke="#ebecef" stroke-width="1"/>
<text x="338.6" y="549.65" text-anchor="end" font-family="Liberation Sans" font-size="7" fill="#2a3850" stroke="#2a3850" stroke-width="0.22">1800</text>
<path d="M342.8 570.7 H859.5" stroke="#ebecef" stroke-width="1"/>
<text x="338.6" y="572.45" text-anchor="end" font-family="Liberation Sans" font-size="7" fill="#2a3850" stroke="#2a3850" stroke-width="0.22">1200</text>
<path d="M342.8 593.5 H859.5" stroke="#ebecef" stroke-width="1"/>
<text x="338.6" y="595.25" text-anchor="end" font-family="Liberation Sans" font-size="7" fill="#2a3850" stroke="#2a3850" stroke-width="0.22">600</text>
<path d="M342.8 616.3 H859.5" stroke="#ebecef" stroke-width="1"/>
<text x="338.6" y="618.05" text-anchor="end" font-family="Liberation Sans" font-size="7" fill="#2a3850" stroke="#2a3850" stroke-width="0.22">0</text>
<defs><pattern id="bd" width="3" height="3" patternUnits="userSpaceOnUse"><circle cx="1.5" cy="1.5" r="0.4" fill="#000" fill-opacity="0.13"/></pattern></defs>
<path d="M353.5 620 V562.0 Q353.5 561.0 354.5 561.0 H383.7 Q384.7 561.0 384.7 562.0 V620 Z" fill="#73abf3"/>
<path d="M431.0 620 V531.3 Q431.0 530.3 432.0 530.3 H461.2 Q462.2 530.3 462.2 531.3 V620 Z" fill="#68a3f0"/>
<path d="M508.4 620 V554.0 Q508.4 553.0 509.4 553.0 H538.6 Q539.6 553.0 539.6 554.0 V620 Z" fill="#5b97ec"/>
<rect x="508.4" y="553.0" width="31.2" height="67.0" fill="url(#bd)"/>
<path d="M585.8 620 V594.2 Q585.8 593.2 586.8 593.2 H616.0 Q617.0 593.2 617.0 594.2 V620 Z" fill="#5393ec"/>
<path d="M663.0 620 V594.2 Q663.0 593.2 664.0 593.2 H693.2 Q694.2 593.2 694.2 594.2 V620 Z" fill="#4388e8"/>
<path d="M741.0 620 V594.2 Q741.0 593.2 742.0 593.2 H771.2 Q772.2 593.2 772.2 594.2 V620 Z" fill="#2f7be6"/>
<rect x="741.0" y="593.2" width="31.2" height="26.799999999999955" fill="url(#bd)"/>
<path d="M818.0 620 V517.9 Q818.0 516.9 819.0 516.9 H848.2 Q849.2 516.9 849.2 517.9 V620 Z" fill="#1a74e2"/>
</svg>
</body></html>
